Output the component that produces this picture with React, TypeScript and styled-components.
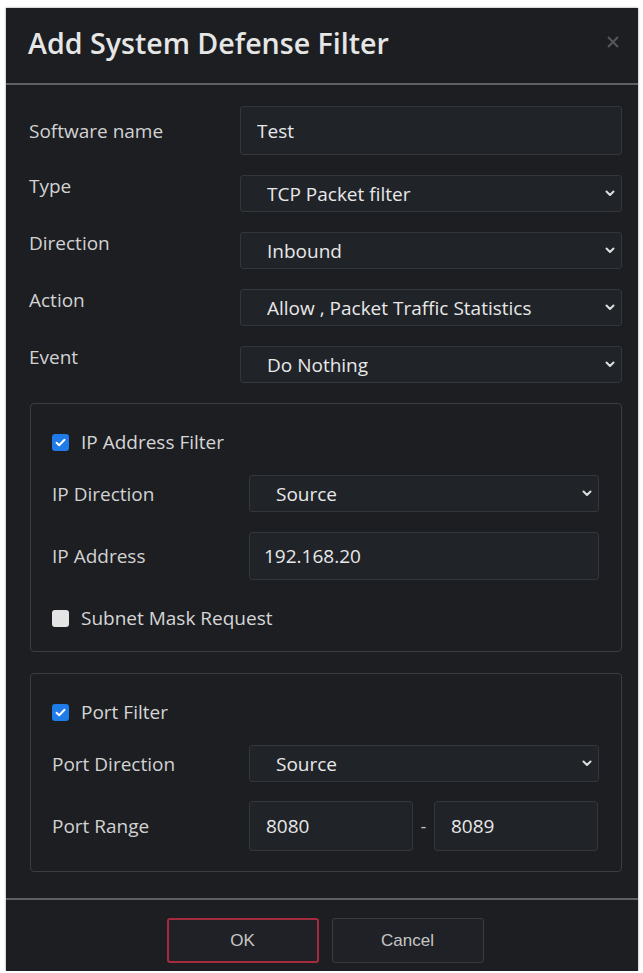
import React from 'react';
import styled, { createGlobalStyle } from 'styled-components';

const GlobalStyle = createGlobalStyle`
  html, body {
    margin: 0;
    padding: 0;
    background: #ffffff;
  }
  body {
    font-family: 'Open Sans', 'Noto Sans', sans-serif;
  }
  * {
    box-sizing: border-box;
  }
`;

const Chevron = () => (
  <ChevronIcon width="10" height="7" viewBox="0 0 10 7">
    <polyline points="1.5,1.5 5,5 8.5,1.5" fill="none" stroke="#dedede" strokeWidth="2" strokeLinecap="round" strokeLinejoin="round" />
  </ChevronIcon>
);

const CloseIcon = () => (
  <svg width="12" height="12" viewBox="0 0 12 12">
    <line x1="1" y1="1" x2="11" y2="11" stroke="#55585c" strokeWidth="2" />
    <line x1="11" y1="1" x2="1" y2="11" stroke="#55585c" strokeWidth="2" />
  </svg>
);

const Check = ({ checked }: { checked?: boolean }) => (
  <CheckBox $checked={checked}>
    {checked && (
      <svg width="11" height="9" viewBox="0 0 11 9">
        <polyline points="1.5,4.8 4.2,7.2 9.5,1.8" fill="none" stroke="#ffffff" strokeWidth="2" strokeLinecap="round" strokeLinejoin="round" />
      </svg>
    )}
  </CheckBox>
);

const Select = ({ value, options }: { value: string; options?: string[] }) => (
  <SelectWrap>
    <SelectField defaultValue={value}>
      {(options ?? [value]).map((o) => (
        <option key={o}>{o}</option>
      ))}
    </SelectField>
    <Chevron />
  </SelectWrap>
);

const App = () => {
  return (
    <>
      <GlobalStyle />
      <Dialog>
        <Header>
          <Title>Add System Defense Filter</Title>
          <CloseButton>
            <CloseIcon />
          </CloseButton>
        </Header>

        <Body>
          <Row $center>
            <Label>Software name</Label>
            <TextField defaultValue="Test" />
          </Row>
          <Row>
            <Label>Type</Label>
            <Select value="TCP Packet filter" options={['TCP Packet filter', 'UDP Packet filter', 'ICMP Packet filter']} />
          </Row>
          <Row>
            <Label>Direction</Label>
            <Select value="Inbound" options={['Inbound', 'Outbound']} />
          </Row>
          <Row>
            <Label>Action</Label>
            <Select value="Allow , Packet Traffic Statistics" />
          </Row>
          <Row>
            <Label>Event</Label>
            <Select value="Do Nothing" />
          </Row>

          <Group $bottom={21}>
            <CheckRow>
              <Check checked />
              <span>IP Address Filter</span>
            </CheckRow>
            <GroupRow $top={21}>
              <Label>IP Direction</Label>
              <Select value="Source" options={['Source', 'Destination']} />
            </GroupRow>
            <GroupRow $top={20}>
              <Label>IP Address</Label>
              <TextField defaultValue="192.168.20" $indent={14} $height={48} />
            </GroupRow>
            <CheckRow $top={26}>
              <Check />
              <span>Subnet Mask Request</span>
            </CheckRow>
          </Group>

          <Group $bottom={20} $gapAbove={1}>
            <CheckRow>
              <Check checked />
              <span>Port Filter</span>
            </CheckRow>
            <GroupRow $top={21}>
              <Label>Port Direction</Label>
              <Select value="Source" options={['Source', 'Destination']} />
            </GroupRow>
            <GroupRow $top={19}>
              <Label>Port Range</Label>
              <Range>
                <TextField defaultValue="8080" $height={50} />
                <Dash>-</Dash>
                <TextField defaultValue="8089" $height={50} />
              </Range>
            </GroupRow>
          </Group>
        </Body>

        <Footer>
          <Button $primary>OK</Button>
          <Button>Cancel</Button>
        </Footer>
      </Dialog>
    </>
  );
};

export default App;

const Dialog = styled.div`
  margin: 8px 5px 0 6px;
  width: 632px;
  background: #1c1e22;
  display: flex;
  flex-direction: column;
  box-shadow: 0 0 2px rgba(0, 0, 0, 0.45);
`;

const Header = styled.div`
  display: flex;
  align-items: flex-start;
  justify-content: space-between;
  height: 77px;
  padding: 17px 19px 0 22px;
  border-bottom: 2px solid #5d6064;
`;

const Title = styled.h1`
  margin: 0;
  font-size: 28.6px;
  line-height: 35px;
  font-weight: 600;
  color: #e6e6e6;
`;

const CloseButton = styled.div`
  margin-top: 11px;
  display: flex;
`;

const Body = styled.div`
  display: flex;
  flex-direction: column;
  gap: 20px;
  padding: 21px 16px 26px 23px;
`;

const Row = styled.div<{ $center?: boolean }>`
  display: grid;
  grid-template-columns: 211px 1fr;
  align-items: ${({ $center }) => ($center ? 'center' : 'start')};
`;

const Label = styled.div`
  font-size: 19px;
  line-height: 22px;
  color: #d2d2d2;
  white-space: nowrap;
`;

const fieldBase = `
  width: 100%;
  background: #202328;
  border: 1px solid #33363b;
  border-radius: 3px;
  color: #e8e8e8;
  font-family: 'Open Sans', 'Noto Sans', sans-serif;
  font-size: 19px;
  outline: none;
`;

const TextField = styled.input<{ $indent?: number; $height?: number }>`
  ${fieldBase}
  height: ${({ $height }) => $height ?? 49}px;
  padding: 0 0 0 ${({ $indent }) => $indent ?? 16}px;
`;

const SelectWrap = styled.div`
  position: relative;
  width: 100%;
`;

const SelectField = styled.select`
  ${fieldBase}
  appearance: none;
  height: 37px;
  padding: 0 30px 0 26px;
  display: block;
`;

const ChevronIcon = styled.svg`
  position: absolute;
  right: 7px;
  top: 15px;
  pointer-events: none;
`;

const Group = styled.div<{ $bottom: number; $gapAbove?: number }>`
  display: flex;
  flex-direction: column;
  border: 1px solid #393c41;
  border-radius: 4px;
  padding: 26px 22px ${({ $bottom }) => $bottom}px 21px;
  margin: ${({ $gapAbove }) => $gapAbove ?? 0}px 0 0 1px;
`;

const GroupRow = styled.div<{ $top: number }>`
  display: grid;
  grid-template-columns: 197px 1fr;
  align-items: center;
  margin-top: ${({ $top }) => $top}px;
`;

const CheckRow = styled.label<{ $top?: number }>`
  display: flex;
  align-items: center;
  gap: 12px;
  height: 24px;
  margin-top: ${({ $top }) => $top ?? 0}px;
  font-size: 19px;
  color: #d6d6d6;
`;

const CheckBox = styled.span<{ $checked?: boolean }>`
  width: 17px;
  height: 17px;
  border-radius: 3px;
  display: flex;
  align-items: center;
  justify-content: center;
  background: ${({ $checked }) => ($checked ? '#1f7be8' : '#e4e4e4')};
  flex-shrink: 0;
`;

const Range = styled.div`
  display: grid;
  grid-template-columns: 164px 21px 164px;
  align-items: center;
`;

const Dash = styled.span`
  text-align: center;
  color: #bdbdbd;
  font-size: 18px;
`;

const Footer = styled.div`
  display: flex;
  justify-content: center;
  gap: 13px;
  border-top: 2px solid #5d6064;
  padding: 18px 0 8px 6px;
`;

const Button = styled.button<{ $primary?: boolean }>`
  width: 152px;
  height: 45px;
  border-radius: 3px;
  background: #1f2126;
  border: ${({ $primary }) => ($primary ? '2px solid #a52a3d' : '1px solid #383b40')};
  color: #c6c6c6;
  font-family: 'Liberation Sans', Arial, sans-serif;
  font-size: 17px;
  cursor: pointer;
`;
